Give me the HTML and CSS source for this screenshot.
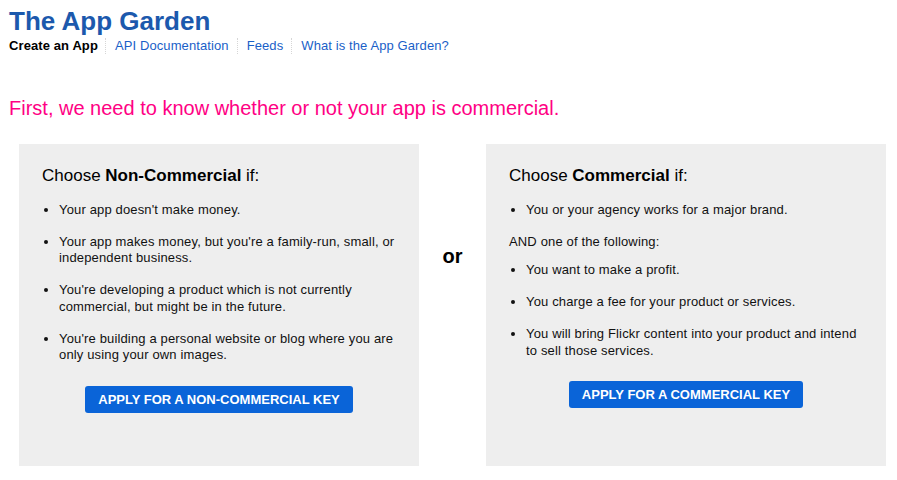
FILE: index.html
```html
<!DOCTYPE html>
<html>
<head>
<meta charset="utf-8">
<title>The App Garden</title>
<link rel="stylesheet" href="styles.css">
</head>
<body>
<div class="page">
  <h1 class="title">The App Garden</h1>
  <nav class="nav">
    <span class="nav-item current">Create an App</span>
    <a class="nav-item" href="#">API Documentation</a>
    <a class="nav-item" href="#">Feeds</a>
    <a class="nav-item" href="#">What is the App Garden?</a>
  </nav>
  <h2 class="lead">First, we need to know whether or not your app is commercial.</h2>
  <div class="choices">
    <div class="box">
      <h3 class="box-title">Choose <b>Non-Commercial</b> if:</h3>
      <ul class="list">
        <li>Your app doesn't make money.</li>
        <li>Your app makes money, but you're a family-run, small, or independent business.</li>
        <li>You're developing a product which is not currently commercial, but might be in the future.</li>
        <li>You're building a personal website or blog where you are only using your own images.</li>
      </ul>
      <div class="btn-row"><a class="btn" href="#">Apply for a Non-Commercial Key</a></div>
    </div>
    <div class="or">or</div>
    <div class="box">
      <h3 class="box-title">Choose <b>Commercial</b> if:</h3>
      <ul class="list">
        <li>You or your agency works for a major brand.</li>
      </ul>
      <p class="and">AND one of the following:</p>
      <ul class="list">
        <li>You want to make a profit.</li>
        <li>You charge a fee for your product or services.</li>
        <li>You will bring Flickr content into your product and intend to sell those services.</li>
      </ul>
      <div class="btn-row"><a class="btn" href="#">Apply for a Commercial Key</a></div>
    </div>
  </div>
</div>
</body>
</html>
```

FILE: styles.css
```css
html, body {
  margin: 0;
  padding: 0;
  background: #ffffff;
}
body {
  font-family: "Liberation Sans", Arial, Helvetica, sans-serif;
  color: #111;
}
.page {
  padding: 6px 9px 0 9px;
}
.title {
  margin: 0;
  font-size: 26px;
  line-height: 30px;
  font-weight: bold;
  color: #1c59ad;
}
.nav {
  display: flex;
  align-items: center;
  margin-top: 2px;
  font-size: 13px;
  line-height: 16px;
}
.nav-item {
  color: #1a5fc8;
  text-decoration: none;
  padding: 0 8px 0 9px;
  border-left: 1px dotted #d6d6d6;
  letter-spacing: 0.1px;
}
.nav-item.current {
  color: #000;
  font-weight: bold;
  padding-left: 0;
  border-left: none;
  padding-right: 7px;
}
.lead {
  margin: 42px 0 0 0;
  font-size: 20px;
  line-height: 24px;
  font-weight: normal;
  color: #ff0084;
}
.choices {
  display: flex;
  margin: 24px 0 0 10px;
}
.box {
  width: 400px;
  height: 322px;
  box-sizing: border-box;
  background: #eeeeee;
  padding: 22px 20px 0 23px;
}
.box-title {
  margin: 0 0 16px 0;
  font-size: 17px;
  line-height: 20px;
  font-weight: normal;
  color: #000;
}
.box-title b {
  font-weight: bold;
}
.list {
  margin: 0;
  padding: 0 0 0 17px;
  font-size: 13px;
  line-height: 16.7px;
  letter-spacing: 0.15px;
  color: #111;
}
.list li {
  margin-bottom: 15px;
}
.and {
  margin: 0 0 12px 0;
  font-size: 13px;
  line-height: 16.7px;
  letter-spacing: 0.15px;
}
.btn-row {
  display: flex;
  justify-content: center;
  margin-top: 22px;
  margin-right: 3px;
}
.btn {
  display: block;
  height: 27px;
  line-height: 27px;
  padding: 0 13px;
  background: #0a64d8;
  color: #fff;
  font-size: 13px;
  font-weight: bold;
  text-transform: uppercase;
  text-decoration: none;
  border-radius: 3px;
}
.or {
  width: 67px;
  text-align: center;
  padding-top: 100px;
  font-size: 20px;
  line-height: 24px;
  font-weight: bold;
  color: #000;
}
```
